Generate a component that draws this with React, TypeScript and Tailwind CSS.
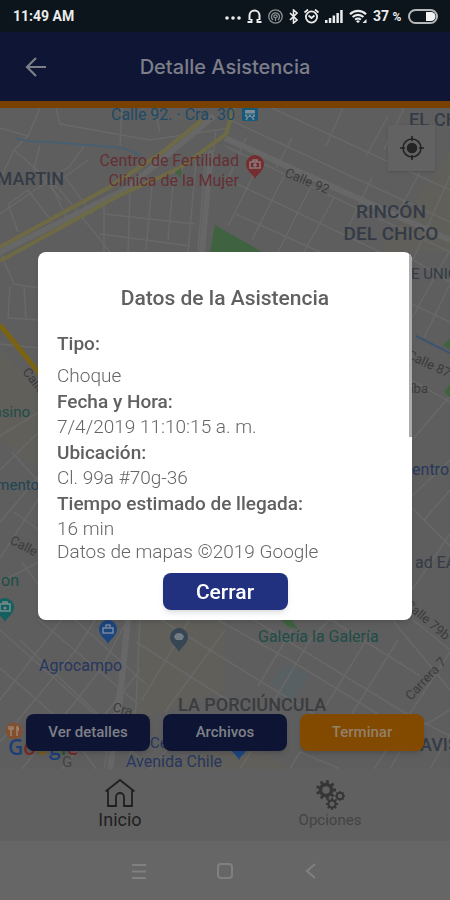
import React from 'react';

const ROADS = [
  'M0 128L28 136L40 108', 'M28 136L14 150L0 180', 'M14 150L60 190L110 252', 'M40 145L34 168L62 200',
  'M0 214L70 166L84 146', 'M18 232L8 204L28 190L52 222', 'M70 226L52 186L88 160', 'M92 214L66 178',
  'M56 108L60 124L150 140L230 128', 'M120 146L122 108', 'M160 132L154 108', 'M104 200V252', 'M130 192L128 252',
  'M152 184L146 250', 'M174 176L168 240', 'M100 234L190 246', 'M104 214L195 224', 'M196 160L188 252',
  'M206 150L198 252', 'M216 130L204 232', 'M230 120L450 222', 'M225 146L450 252', 'M246 138L225 186',
  'M292 138L276 168', 'M343 108L326 146', 'M388 116L366 156', 'M404 108L384 150', 'M272 108L450 190',
  'M225 178L380 252', 'M262 158L228 226', 'M284 176L252 240', 'M310 188L278 252', 'M334 198L304 252',
  'M236 214L320 252', 'M372 178L346 232', 'M420 172L396 216', 'M450 176L412 262', 'M400 252L450 282',
  'M412 304L450 322', 'M412 318L432 282L450 250', 'M424 338L450 284', 'M412 380L450 402', 'M412 440L450 396',
  'M412 508L450 546', 'M412 496L450 460', 'M424 520L450 490', 'M412 590L450 534', 'M0 252L14 284L39 288',
  'M10 286L8 318L39 320', 'M24 286L26 320', 'M0 344L39 348', 'M0 436L39 412', 'M0 470L39 432', 'M12 452L39 482',
  'M0 522L39 476', 'M0 558L39 498', 'M14 512L39 530', 'M0 582L39 562', 'M22 562L39 586',
  'M0 630L90 710L150 769', 'M0 668L60 720L96 769', 'M0 700L40 648L62 619', 'M0 742L76 650L96 619',
  'M22 769L100 670L128 619', 'M62 769L140 670', 'M38 619L138 704', 'M74 619L146 684', 'M20 640L106 722',
  'M126 619L118 690L104 769', 'M140 619L136 706L128 769', 'M142 700L190 619', 'M165 712L225 630',
  'M136 642L240 708', 'M160 619L330 724', 'M216 619L290 660L420 740', 'M252 619L400 710L450 736',
  'M258 686L292 630', 'M270 708L310 640L330 619', 'M326 706L370 634', 'M348 720L398 640', 'M330 619L420 676',
  'M394 622L450 690', 'M374 769L450 652', 'M412 619L450 650', 'M400 740L450 710', 'M430 769L450 734',
  'M290 769L300 752L340 769', 'M150 769L180 735', 'M240 769L258 740', 'M390 769L402 748',
];

function MapLabel({ x, y, size = 16, color = '#343b46', weight = 400, anchor = 'start', rotate = 0, children }: {
  x: number; y: number; size?: number; color?: string; weight?: number;
  anchor?: 'start' | 'middle' | 'end'; rotate?: number; children: React.ReactNode;
}) {
  return (
    <text x={x} y={y} fontSize={size} fill={color} fontWeight={weight} textAnchor={anchor}
      transform={rotate ? `rotate(${rotate} ${x} ${y})` : undefined}>
      {children}
    </text>
  );
}

function Pin({ x, y, color, children }: { x: number; y: number; color: string; children?: React.ReactNode }) {
  return (
    <g transform={`translate(${x} ${y})`}>
      <path d="M0 15C-1 11 -9 7 -9 0A9 9 0 0 1 9 0C9 7 1 11 0 15Z" fill={color} />
      {children}
    </g>
  );
}

function CityMap() {
  return (
    <svg viewBox="0 108 450 661" preserveAspectRatio="xMidYMid slice" className="absolute inset-0 h-full w-full font-[Roboto,sans-serif]" role="img" aria-label="Mapa">
      <rect x="-450" y="0" width="1350" height="900" fill="#5e5e5e" />
      <path d="M380 252L450 150V252ZM136 619H225V690L136 720Z" fill="#605f5a" />
      <path d="M150 769L250 740L290 769ZM0 350L39 390V470L0 440Z" fill="#605f5a" />
      <path d="M272 680L286 664L310 674L290 704Z" fill="#596064" />
      <g fill="none" stroke="#686868" strokeWidth="1.5">
        {ROADS.map((d) => <path key={d} d={d} />)}
      </g>
      <g fill="none" stroke="#676767" strokeWidth="6">
        <path d="M225 138L450 240" />
        <path d="M0 252L125 190L214 116" />
        <path d="M211 150L202 252" />
        <path d="M128 619L120 700L110 769" />
      </g>
      <g fill="none" stroke="#6e6a45" strokeWidth="4">
        <path d="M0 247L108 188L160 154L202 120" />
        <path d="M0 261L118 196L180 168L226 134L234 108" />
      </g>
      <path d="M0 325L40 374" stroke="#7a6412" strokeWidth="5" />
      <path d="M15 138Q25 142 50 142L112 147Q130 148 140 156" fill="none" stroke="#485f70" strokeWidth="2" />
      <path d="M416 336L450 353" stroke="#3d5470" strokeWidth="2" />
      <path d="M215 225L262 252H210ZM443 345L450 338V350ZM444 392L450 384V398ZM280 619H291L298 629L288 627ZM175 172L181 168V178Z" fill="#3f6340" />

      <MapLabel x={111} y={120} color="#1d4a66">Calle 92. · Cra. 30</MapLabel>
      <g transform="translate(242 107)">
        <rect width="16" height="14" rx="2" fill="#155a7c" />
        <rect x="3" y="3" width="10" height="7" rx="1" fill="#7b8c94" />
        <path d="M3 7H13" stroke="#155a7c" strokeWidth="1" />
        <path d="M4 13L6 10M12 13L10 10" stroke="#7b8c94" strokeWidth="1.5" />
        <path d="M5 8.500H7M9 8.500H11" stroke="#155a7c" strokeWidth="1.5" />
      </g>
      <MapLabel x={239} y={166} anchor="end" color="#642f33">Centro de Fertilidad</MapLabel>
      <MapLabel x={239} y={186} anchor="end" color="#642f33">Clínica de la Mujer</MapLabel>
      <Pin x={255} y={164} color="#762d2f">
        <path d="M-5 -2H5V4H-5ZM-2 -2V-4H2V-2M0 -1V3M-2 1H2" fill="none" stroke="#8a7a7a" strokeWidth="1.5" />
      </Pin>
      <MapLabel x={284} y={176} size={13} color="#3b3b3b" rotate={23}>Calle 92</MapLabel>
      <MapLabel x={64} y={185} size={18} weight={500} anchor="end">SAN MARTIN</MapLabel>
      <MapLabel x={391} y={218} size={19} weight={500} anchor="middle">RINCÓN</MapLabel>
      <MapLabel x={391} y={240} size={19} weight={500} anchor="middle">DEL CHICO</MapLabel>
      <MapLabel x={409} y={126} size={18} weight={500}>EL</MapLabel>
      <MapLabel x={434} y={126} size={18} weight={500}>CHICO</MapLabel>
      <MapLabel x={411} y={279} size={15}>E UNIÓN</MapLabel>
      <MapLabel x={406} y={358} size={13} color="#3b3b3b" rotate={25}>Calle 87</MapLabel>
      <MapLabel x={428} y={393} size={13} color="#3b3b3b" anchor="end">íba</MapLabel>
      <MapLabel x={449} y={475} size={16} anchor="end" color="#28375a">Centro</MapLabel>
      <MapLabel x={415} y={568} size={16}>ad EAN</MapLabel>
      <MapLabel x={22} y={372} size={13} color="#3b3b3b" rotate={52}>Calle</MapLabel>
      <MapLabel x={30} y={417} size={15} anchor="end" color="#1e4c48">Casino</MapLabel>
      <MapLabel x={39} y={490} size={15} anchor="end" color="#1e4354">mento</MapLabel>
      <MapLabel x={9} y={543} size={13} color="#3b3b3b" rotate={28}>Calle 9</MapLabel>
      <MapLabel x={19} y={586} anchor="end" color="#1e4c48">on</MapLabel>
      <Pin x={5} y={607} color="#12605f">
        <path d="M-5 -3H5V4H-5ZM-2 -3V-5H2V-3" fill="none" stroke="#7a8c8c" strokeWidth="1.5" />
        <circle r="1.5" cy="1" fill="#7a8c8c" />
      </Pin>
      <Pin x={108} y={629} color="#1c4680">
        <path d="M-5 -1H5V4H-5ZM-2 -1V-4H2V-1" fill="none" stroke="#78859a" strokeWidth="1.5" />
      </Pin>
      <Pin x={179} y={637} color="#374654">
        <path d="M-5 0Q-4 -4 0 -4T5 0L3 3H-3Z" fill="#737b82" />
      </Pin>
      <Pin x={239} y={745} color="#1c4680" />
      <MapLabel x={39} y={671} color="#27365e">Agrocampo</MapLabel>
      <MapLabel x={258} y={642} color="#1e4c48">Galería la Galería</MapLabel>
      <MapLabel x={404} y={606} size={13} color="#3b3b3b" rotate={40}>Calle 79b</MapLabel>
      <MapLabel x={411} y={701} size={13} color="#3b3b3b" rotate={-47}>Carrera 7</MapLabel>
      <MapLabel x={178} y={711} size={18} weight={500} color="#3a3c40">LA PORCIÚNCULA</MapLabel>
      <MapLabel x={112} y={711} size={13} color="#3b3b3b" rotate={15}>Cra</MapLabel>
      <MapLabel x={150} y={748} size={15} color="#27365e">Centro</MapLabel>
      <MapLabel x={126} y={767} color="#27365e">Avenida Chile</MapLabel>
      <MapLabel x={420} y={751} size={18} weight={500}>AVISTA</MapLabel>
      <MapLabel x={62} y={767} size={15} color="#444444">G</MapLabel>
      <circle cx="14" cy="731" r="8.5" fill="#83502f" />
      <path d="M11 726V736M9 726V729H13V726M17 726V736M17 726Q19 728 18 731" fill="none" stroke="#9a8273" strokeWidth="1.5" />
      <text x="8" y="755" fontSize="21" fontWeight="600" className="font-['Open_Sans',sans-serif]">
        <tspan fill="#1d3f78">G</tspan><tspan fill="#762b27">o</tspan><tspan fill="#786020">o</tspan><tspan fill="#1d3f78">g</tspan><tspan fill="#235c34">l</tspan><tspan fill="#762b27">e</tspan>
      </text>
    </svg>
  );
}

function StatusBar() {
  return (
    <div className="flex h-8 shrink-0 items-center justify-between bg-[#0b151b] pr-3 pl-[13px] text-sm font-bold text-[#ececec]">
      <span>11:49 AM</span>
      <div className="flex items-center gap-1.5">
        <svg className="mt-1 h-1 w-4" viewBox="0 0 16 4" fill="currentColor"><circle cx="2" cy="2" r="1.8" /><circle cx="8" cy="2" r="1.8" /><circle cx="14" cy="2" r="1.8" /></svg>
        <svg className="h-[15px] w-[15px]" viewBox="0 0 15 15" fill="none" stroke="currentColor" strokeWidth="2"><path d="M2.5 11V6.5a5 5 0 0 1 10 0V11M0.500 13h4V10M14.500 13h-4V10" /></svg>
        <svg className="h-[15px] w-[15px] text-[#8d9295]" viewBox="0 0 15 15" fill="none" stroke="currentColor" strokeWidth="1.3"><circle cx="7.5" cy="7.5" r="6.7" /><path d="M5 11a4 4 0 1 1 5 0M6.5 8.7a1.6 1.6 0 1 1 2 0M7.5 8v4" /></svg>
        <svg className="h-[15px] w-[9px]" viewBox="0 0 9 15" fill="none" stroke="currentColor" strokeWidth="1.6"><path d="M1 4l7 7-3.5 3V1L8 4l-7 7" /></svg>
        <svg className="h-[15px] w-[15px]" viewBox="0 0 15 15" fill="none" stroke="currentColor" strokeWidth="1.8"><circle cx="7.5" cy="8" r="5.6" /><path d="M4.5 6.5l3 2.5 3-2.5M0.500 3.5L4 0.500M14.500 3.5L11 0.500" /></svg>
        <svg className="h-[13px] w-[18px]" viewBox="0 0 18 13" fill="currentColor"><path d="M0 10h2.5v3H0zM3.8 8h2.5v5H3.8zM7.6 5.5h2.5V13H7.6zM11.4 3h2.5v10h-2.5zM15.2 0h2.5v13h-2.5z" /></svg>
        <svg className="h-[15px] w-[18px]" viewBox="0 0 18 15" fill="none" stroke="currentColor" strokeWidth="2.2"><path d="M1 5.2a11.5 11.5 0 0 1 16 0M3.6 8a7.7 7.7 0 0 1 10.8 0M6.2 10.7a4 4 0 0 1 5.6 0" /><path d="M9 11l2 1.500L9 14l-2-1.500z" fill="currentColor" stroke="none" /><path d="M17.500 10v4h-4z" fill="currentColor" stroke="none" /></svg>
        <span className="w-[29px] whitespace-nowrap">37 <small className="text-xs">%</small></span>
        <svg className="h-[15px] w-[30px]" viewBox="0 0 30 15"><rect x="1" y="1" width="28" height="13" rx="6.500" fill="none" stroke="#b4b8ba" strokeWidth="2" /><path d="M18 3h5a4.500 4.500 0 0 1 0 9h-5z" fill="#f2f2f2" /></svg>
      </div>
    </div>
  );
}

const DETAILS = [
  { label: 'Tipo:', value: 'Choque', spaced: true },
  { label: 'Fecha y Hora:', value: '7/4/2019 11:10:15 a. m.' },
  { label: 'Ubicación:', value: 'Cl. 99a #70g-36' },
  { label: 'Tiempo estimado de llegada:', value: '16 min' },
];

function DetailsDialog() {
  return (
    <div className="fixed inset-0 flex items-center justify-center px-[38px] pb-7">
      <div role="dialog" aria-labelledby="dialog-title" className="relative w-full max-w-md overflow-hidden rounded-lg bg-white px-[19px] pb-[10px] text-[19px] text-[#666666] shadow-md">
        <div className="absolute top-0 right-0 h-[185px] w-[3px] bg-[#adadad]" />
        <h2 id="dialog-title" className="pt-8 text-center text-[21px] leading-7 font-medium text-[#606060]">Datos de la Asistencia</h2>
        <dl className="mt-[19px]">
          {DETAILS.map((item) => (
            <React.Fragment key={item.label}>
              <dt className={item.spaced ? 'mb-[7px] leading-[25px] font-medium text-[#606060]' : 'leading-[25px] font-medium text-[#606060]'}>{item.label}</dt>
              <dd className="leading-[26px] font-light">{item.value}</dd>
            </React.Fragment>
          ))}
        </dl>
        <p className="leading-5 font-light">Datos de mapas ©2019 Google</p>
        <button type="button" className="mx-auto mt-[11px] block h-[37px] w-[125px] rounded-lg bg-[#21317f] text-[21px] leading-7 font-medium text-white shadow-md">Cerrar</button>
      </div>
    </div>
  );
}

function gearTeeth(cx: number, cy: number, inner: number, outer: number, count: number) {
  return Array.from({ length: count }, (_, i) => {
    const a = (i * 2 * Math.PI) / count;
    return `M${cx + inner * Math.cos(a)} ${cy + inner * Math.sin(a)}L${cx + outer * Math.cos(a)} ${cy + outer * Math.sin(a)}`;
  }).join('');
}

export default function App() {
  return (
    <div className="flex min-h-screen flex-col bg-[#5e5e5e] font-[Roboto,sans-serif]">
      <StatusBar />
      <header className="grid h-[76px] shrink-0 grid-cols-[72px_1fr_72px] items-center border-b-[7px] border-[#784100] bg-[#0f1535] text-[#7d7f87]">
        <button type="button" aria-label="Volver" className="flex h-full items-center pl-[25px]">
          <svg className="h-5 w-[22px]" viewBox="0 0 22 20" fill="none" stroke="currentColor" strokeWidth="2.2"><path d="M21 10H2M11 1L2 10l9 9" /></svg>
        </button>
        <h1 className="text-center font-[Inter,sans-serif] text-xl font-medium">Detalle Asistencia</h1>
      </header>
      <main className="relative min-h-[480px] flex-1 overflow-hidden">
        <CityMap />
        <button type="button" aria-label="Mi ubicación" className="absolute top-[17px] right-[15px] flex h-[46px] w-[47px] items-center justify-center bg-[#626262] text-[#242424] shadow-sm">
          <svg className="h-[26px] w-[26px]" viewBox="0 0 26 26" fill="none" stroke="currentColor" strokeWidth="1.6"><circle cx="13" cy="13" r="9" /><path d="M13 1v5M13 20v5M1 13h5M20 13h5" /><circle cx="13" cy="13" r="4.5" fill="currentColor" /></svg>
        </button>
        <div className="absolute inset-x-[26px] bottom-[18px] flex gap-[13px] text-[15px] font-medium text-[#7f8087]">
          <button type="button" className="h-[37px] flex-1 rounded-lg bg-[#0e1534] shadow-md">Ver detalles</button>
          <button type="button" className="h-[37px] flex-1 rounded-lg bg-[#0e1534] shadow-md">Archivos</button>
          <button type="button" className="h-[37px] flex-1 rounded-lg bg-[#824900] text-[#93806a] shadow-md">Terminar</button>
        </div>
      </main>
      <nav className="grid h-[72px] shrink-0 grid-cols-2 bg-[#606060] px-[15px] pt-[9px]">
        <a href="#inicio" className="flex flex-col items-center text-lg leading-5 text-[#202020]">
          <svg className="h-8 w-[30px]" viewBox="0 0 30 32" fill="none" stroke="currentColor" strokeWidth="1.800"><path d="M0.500 13.500L15 2l14.500 11.500M3 12.500V28h8V19a4 4 0 0 1 8 0v9h8V12.500" /></svg>
          Inicio
        </a>
        <a href="#opciones" className="flex flex-col items-center text-[15px] leading-5 text-[#434343]">
          <svg className="h-8 w-[30px]" viewBox="0 0 30 32" fill="none" stroke="#363636">
            <circle cx="11" cy="12" r="5.500" strokeWidth="3.500" />
            <path d={gearTeeth(11, 12, 6, 10, 9)} strokeWidth="2.800" />
            <circle cx="25" cy="18" r="3.300" strokeWidth="2" />
            <path d={gearTeeth(25, 18, 3.5, 5, 8)} strokeWidth="1.300" />
            <circle cx="17" cy="26" r="3.600" strokeWidth="2.200" />
            <path d={gearTeeth(17, 26, 4, 6, 8)} strokeWidth="1.800" />
          </svg>
          Opciones
        </a>
      </nav>
      <div className="flex h-[59px] shrink-0 items-center justify-center gap-[70px] bg-[#666666] text-[#808080]">
        <button type="button" aria-label="Recientes"><svg className="h-4 w-4" viewBox="0 0 16 16" stroke="currentColor" strokeWidth="2"><path d="M1 2h14M1 8.500h14M1 15h14" /></svg></button>
        <button type="button" aria-label="Pantalla de inicio"><svg className="h-4 w-4" viewBox="0 0 16 16" fill="none" stroke="currentColor" strokeWidth="2"><rect x="1" y="1" width="14" height="14" rx="3" /></svg></button>
        <button type="button" aria-label="Atrás"><svg className="h-4 w-4" viewBox="0 0 16 16" fill="none" stroke="currentColor" strokeWidth="2"><path d="M12 1L4 8l8 7" /></svg></button>
      </div>
      <DetailsDialog />
    </div>
  );
}
